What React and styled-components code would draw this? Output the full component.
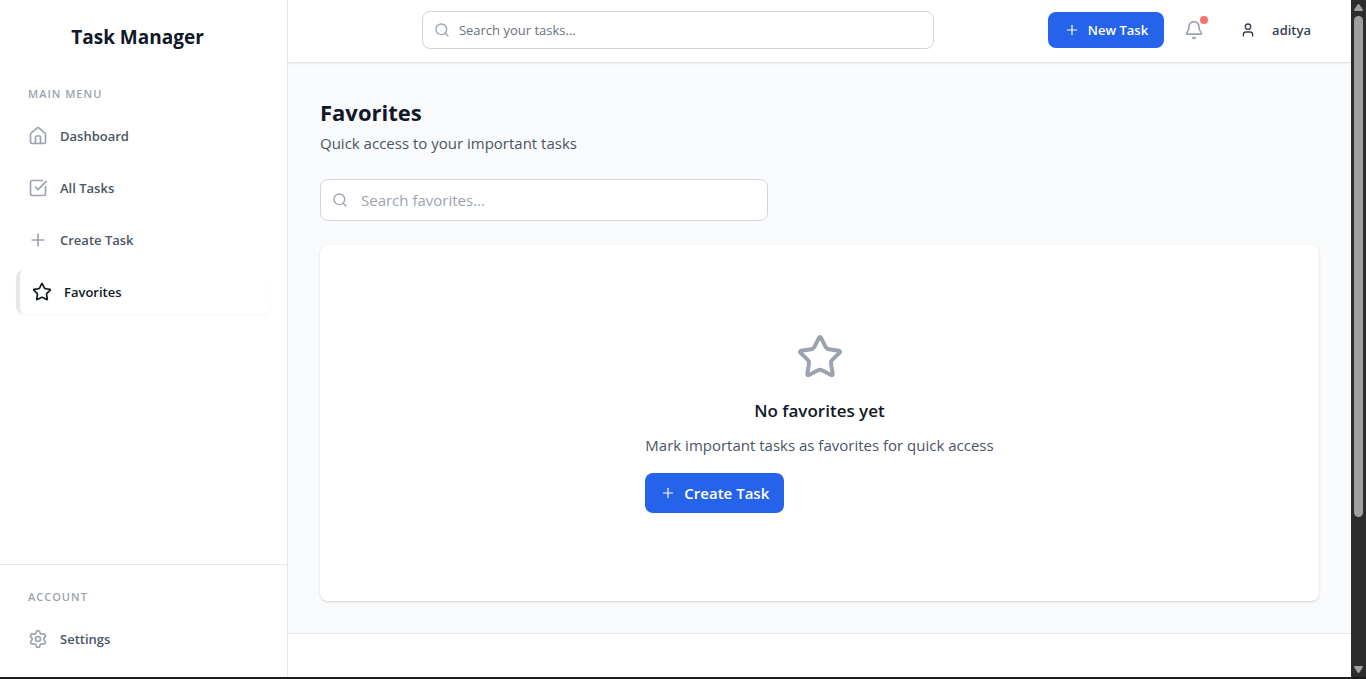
import React from "react";
import styled, { createGlobalStyle } from "styled-components";
import { House, SquareCheckBig, Plus, Star, Settings, Search, Bell, User } from "lucide-react";

const GlobalStyle = createGlobalStyle`
  *, *::before, *::after { box-sizing: border-box; }
  body {
    margin: 0;
    font-family: "Segoe UI", "Open Sans", "Noto Sans", sans-serif;
    font-size: 15px;
    line-height: 24px;
    color: #4b5563;
    background: #ffffff;
  }
  h1, h2, p, ul { margin: 0; padding: 0; }
  ul { list-style: none; }
  button, input { font-family: inherit; }
  a { text-decoration: none; }
`;

const Shell = styled.div`
  display: grid;
  grid-template-columns: 288px minmax(0, 1fr) 15px;
  min-height: 100vh;
  border-bottom: 2px solid #1c1c1c;
`;

const Sidebar = styled.aside`
  display: flex;
  flex-direction: column;
  background: #ffffff;
  border-right: 1px solid #e5e7eb;
`;

const Brand = styled.a`
  padding: 22px 16px;
  text-align: center;
  font-size: 19px;
  line-height: 30px;
  font-weight: 700;
  color: #111827;
  margin-right: 12px;
`;

const Nav = styled.nav`
  padding: ${(p) => (p.$footer ? "24px 16px 16px" : "12px 16px")};
  margin-top: ${(p) => (p.$footer ? "auto" : "0")};
  border-top: ${(p) => (p.$footer ? "1px solid #e5e7eb" : "0")};
`;

const NavHeading = styled.h2`
  padding: 0 12px;
  margin-bottom: 12px;
  font-size: 11px;
  line-height: 16px;
  font-weight: 600;
  letter-spacing: 1px;
  text-transform: uppercase;
  color: #9ca3af;
`;

const NavList = styled.ul`
  display: grid;
  gap: 8px;
`;

const NavLink = styled.a`
  display: flex;
  align-items: center;
  gap: 12px;
  height: 44px;
  padding: 0 12px;
  border-radius: 8px;
  border-left: ${(p) => (p.$active ? "4px solid #e5e7eb" : "0")};
  box-shadow: ${(p) => (p.$active ? "0 1px 2px rgba(0, 0, 0, 0.05)" : "none")};
  font-size: 13px;
  font-weight: 600;
  color: ${(p) => (p.$active ? "#111827" : "#4b5563")};

  svg {
    color: ${(p) => (p.$active ? "#111827" : "#9ca3af")};
  }
`;

const Main = styled.div`
  display: flex;
  flex-direction: column;
  min-width: 0;
`;

const TopBar = styled.header`
  position: relative;
  display: flex;
  align-items: center;
  gap: 12px;
  padding: 11px 32px 13px;
  background: #ffffff;
  border-bottom: 1px solid #e5e7eb;
  box-shadow: 0 1px 2px rgba(0, 0, 0, 0.05);
`;

const TopSearch = styled.div`
  flex: 1;
  display: flex;
  justify-content: center;
`;

const SearchBox = styled.label`
  display: flex;
  align-items: center;
  gap: ${(p) => (p.$large ? "13px" : "9px")};
  width: 100%;
  max-width: ${(p) => (p.$large ? "448px" : "512px")};
  height: ${(p) => (p.$large ? "42px" : "38px")};
  padding: 0 11px;
  background: #ffffff;
  border: 1px solid #d1d5db;
  border-radius: 8px;
  color: #9ca3af;

  svg { flex: none; }
`;

const SearchInput = styled.input`
  flex: 1;
  min-width: 0;
  padding: 0;
  border: 0;
  outline: 0;
  background: transparent;
  color: #111827;
  font-size: ${(p) => (p.$large ? "15px" : "13px")};

  &::placeholder {
    color: ${(p) => (p.$large ? "#9ca3af" : "#6b7280")};
    opacity: 1;
  }
`;

const PrimaryButton = styled.button`
  display: inline-flex;
  align-items: center;
  justify-content: center;
  gap: 8px;
  height: ${(p) => (p.$large ? "40px" : "36px")};
  padding: 0 ${(p) => (p.$large ? "15px" : "16px")};
  border: 0;
  border-radius: 8px;
  background: #2563eb;
  color: #ffffff;
  font-size: ${(p) => (p.$large ? "15px" : "13px")};
  font-weight: 600;
`;

const BellButton = styled.button`
  position: relative;
  display: grid;
  place-items: center;
  width: 36px;
  height: 36px;
  padding: 0;
  border: 0;
  background: transparent;
  color: #9ca3af;

  &::after {
    content: "";
    position: absolute;
    top: 4px;
    right: 4px;
    width: 8px;
    height: 8px;
    border-radius: 50%;
    background: #f87171;
  }
`;

const UserButton = styled.button`
  display: flex;
  align-items: center;
  gap: 16px;
  margin-left: 16px;
  padding: 0 8px 0 0;
  border: 0;
  background: transparent;
  color: #374151;
  font-size: 13px;
  font-weight: 600;
`;

const Content = styled.main`
  padding: 32px;
  background: #f9fafb;
  border-bottom: 1px solid #e5e7eb;
`;

const PageTitle = styled.h1`
  padding-top: 2px;
  margin-bottom: 4px;
  font-size: 22px;
  line-height: 30px;
  font-weight: 700;
  color: #111827;
`;

const Subtitle = styled.p`
  margin-bottom: 24px;
`;

const EmptyCard = styled.section`
  display: flex;
  justify-content: center;
  margin-top: 24px;
  padding: 88px 32px;
  background: #ffffff;
  border-radius: 8px;
  box-shadow: 0 1px 3px rgba(0, 0, 0, 0.1), 0 1px 2px rgba(0, 0, 0, 0.06);
`;

const EmptyBody = styled.div`
  display: flex;
  flex-direction: column;
  align-items: flex-start;

  > svg {
    align-self: center;
    color: #9ca3af;
  }
`;

const EmptyTitle = styled.h2`
  align-self: center;
  margin: 16px 0 8px;
  font-size: 17px;
  line-height: 28px;
  font-weight: 600;
  color: #111827;
`;

const EmptyText = styled.p`
  margin-bottom: 16px;
`;

const ScrollTrack = styled.div`
  display: flex;
  flex-direction: column;
  align-items: center;
  padding: 4px 0;
  background: #2c2c2c;
`;

const ScrollArrow = styled.svg`
  flex: none;
  width: 9px;
  height: 7px;
  fill: #9f9f9f;
`;

const ScrollThumb = styled.div`
  flex: 501;
  width: 9px;
  margin-top: 5px;
  border-radius: 5px;
  background: #9f9f9f;
`;

const ScrollRest = styled.div`
  flex: 149;
`;

const menu = [
  { label: "Dashboard", icon: House },
  { label: "All Tasks", icon: SquareCheckBig },
  { label: "Create Task", icon: Plus },
  { label: "Favorites", icon: Star, active: true },
];

const account = [{ label: "Settings", icon: Settings }];

function NavSection({ title, items, footer }) {
  return (
    <Nav $footer={footer} aria-label={title}>
      <NavHeading>{title}</NavHeading>
      <NavList>
        {items.map(({ label, icon: Icon, active }) => (
          <li key={label}>
            <NavLink href="#" $active={active} aria-current={active ? "page" : undefined}>
              <Icon size={20} strokeWidth={2} />
              {label}
            </NavLink>
          </li>
        ))}
      </NavList>
    </Nav>
  );
}

export default function App() {
  return (
    <>
      <GlobalStyle />
      <Shell>
        <Sidebar>
          <Brand href="#">Task Manager</Brand>
          <NavSection title="Main Menu" items={menu} />
          <NavSection title="Account" items={account} footer />
        </Sidebar>
        <Main>
          <TopBar>
            <TopSearch>
              <SearchBox>
                <Search size={16} />
                <SearchInput type="search" aria-label="Search your tasks" placeholder="Search your tasks..." />
              </SearchBox>
            </TopSearch>
            <PrimaryButton type="button">
              <Plus size={16} strokeWidth={1.75} />
              New Task
            </PrimaryButton>
            <BellButton type="button" aria-label="Notifications">
              <Bell size={20} strokeWidth={2} />
            </BellButton>
            <UserButton type="button">
              <User size={16} />
              aditya
            </UserButton>
          </TopBar>
          <Content>
            <PageTitle>Favorites</PageTitle>
            <Subtitle>Quick access to your important tasks</Subtitle>
            <SearchBox $large>
              <Search size={16} />
              <SearchInput $large type="search" aria-label="Search favorites" placeholder="Search favorites..." />
            </SearchBox>
            <EmptyCard>
              <EmptyBody>
                <Star size={48} />
                <EmptyTitle>No favorites yet</EmptyTitle>
                <EmptyText>Mark important tasks as favorites for quick access</EmptyText>
                <PrimaryButton type="button" $large>
                  <Plus size={16} strokeWidth={1.75} />
                  Create Task
                </PrimaryButton>
              </EmptyBody>
            </EmptyCard>
          </Content>
        </Main>
        <ScrollTrack aria-hidden="true">
          <ScrollArrow viewBox="0 0 9 7">
            <path d="M4.5 0 Q5.2 0 5.6 .8 L9 6 Q9 7 8 7 H1 Q0 7 0 6 L3.4 .8 Q3.8 0 4.5 0Z" />
          </ScrollArrow>
          <ScrollThumb />
          <ScrollRest />
          <ScrollArrow viewBox="0 0 9 7">
            <path d="M4.5 7 Q5.2 7 5.6 6.2 L9 1 Q9 0 8 0 H1 Q0 0 0 1 L3.4 6.2 Q3.8 7 4.5 7Z" />
          </ScrollArrow>
        </ScrollTrack>
      </Shell>
    </>
  );
}
